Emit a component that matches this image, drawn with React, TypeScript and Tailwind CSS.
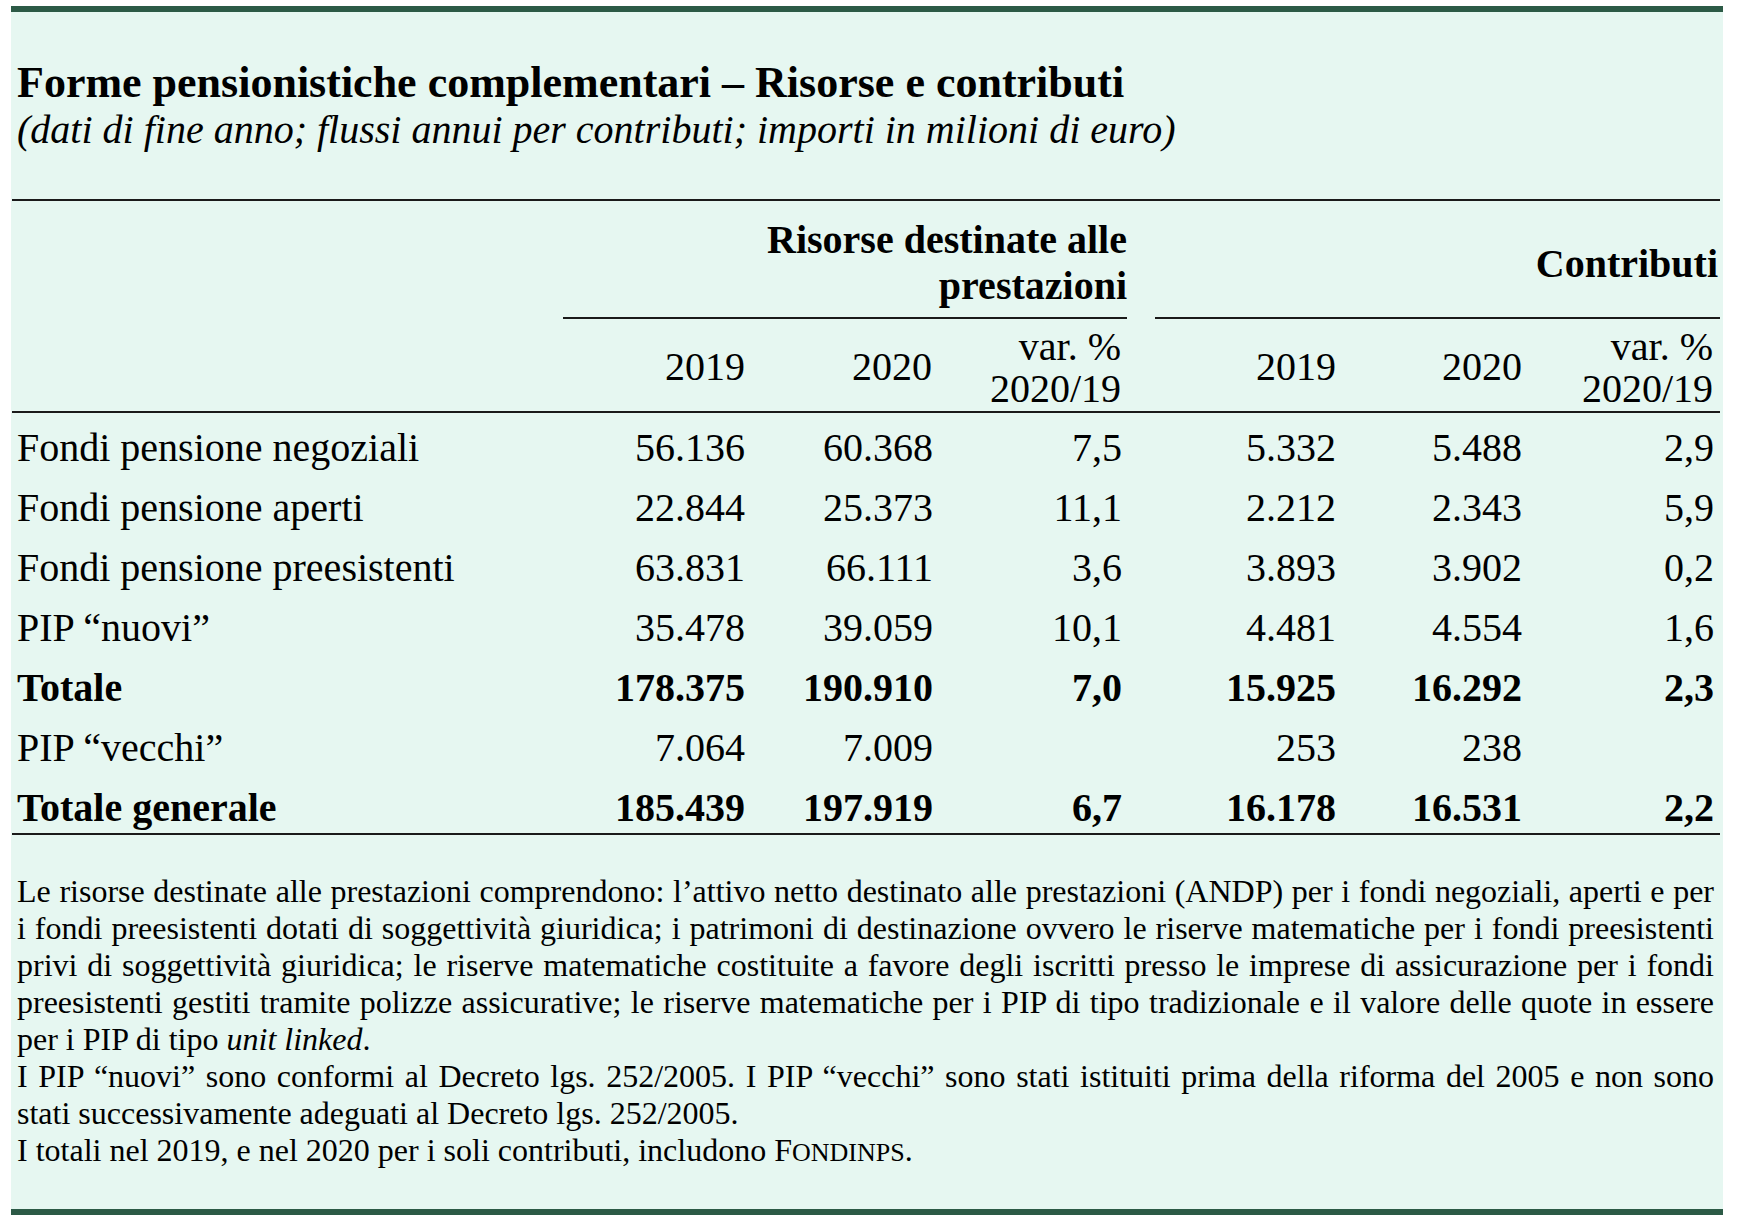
import React from "react";

type Row = { label: string; v: string[]; bold?: boolean };

const rows: Row[] = [
  { label: "Fondi pensione negoziali", v: ["56.136", "60.368", "7,5", "5.332", "5.488", "2,9"] },
  { label: "Fondi pensione aperti", v: ["22.844", "25.373", "11,1", "2.212", "2.343", "5,9"] },
  { label: "Fondi pensione preesistenti", v: ["63.831", "66.111", "3,6", "3.893", "3.902", "0,2"] },
  { label: "PIP “nuovi”", v: ["35.478", "39.059", "10,1", "4.481", "4.554", "1,6"] },
  { label: "Totale", v: ["178.375", "190.910", "7,0", "15.925", "16.292", "2,3"], bold: true },
  { label: "PIP “vecchi”", v: ["7.064", "7.009", "", "253", "238", ""] },
  { label: "Totale generale", v: ["185.439", "197.919", "6,7", "16.178", "16.531", "2,2"], bold: true },
];

const GRID = "grid grid-cols-[551px_190px_188px_186px_28px_188px_189px_188px]";

function BodyRow({ r }: { r: Row }) {
  const w = r.bold ? "font-bold" : "font-normal";
  return (
    <div className={`${GRID} h-[60px] pt-[11px] items-start text-[40px] leading-[48px] ${w}`}>
      <div className="pl-[5px] whitespace-nowrap">{r.label}</div>
      <div className="text-right pr-[8px]">{r.v[0]}</div>
      <div className="text-right pr-[8px]">{r.v[1]}</div>
      <div className="text-right pr-[5px]">{r.v[2]}</div>
      <div />
      <div className="text-right pr-[7px]">{r.v[3]}</div>
      <div className="text-right pr-[10px]">{r.v[4]}</div>
      <div className="text-right pr-[6px]">{r.v[5]}</div>
    </div>
  );
}

export default function App() {
  return (
    <div className="min-h-[1226px] bg-white pt-[6px] pl-[11px] font-['Liberation_Serif','Times_New_Roman',serif] text-black">
      <div className="w-[1712px] bg-[#e6f7f1] border-t-[6px] border-b-[6px] border-[#2c5a46]">
        {/* Title */}
        <div className="pt-[46px] pl-[6px]">
          <div className="text-[44px] leading-[50px] font-bold whitespace-nowrap">
            Forme pensionistiche complementari – Risorse e contributi
          </div>
          <div className="text-[40px] leading-[44px] italic whitespace-nowrap">
            (dati di fine anno; flussi annui per contributi; importi in milioni di euro)
          </div>
        </div>

        {/* Table */}
        <div className="mt-[47px] ml-[1px] w-[1708px] border-t-2 border-[#1a1a1a]">
          {/* header row 1 */}
          <div className={`${GRID} h-[118px] text-[40px] font-bold`}>
            <div />
            <div className="col-span-3 flex flex-col justify-start items-end pt-[16px] text-right leading-[46px] border-b-2 border-[#1a1a1a]">
              <span>Risorse destinate alle</span>
              <span>prestazioni</span>
            </div>
            <div />
            <div className="col-span-3 flex items-start justify-end pt-[40px] pr-[2px] leading-[46px] border-b-2 border-[#1a1a1a]">
              Contributi
            </div>
          </div>
          {/* header row 2 */}
          <div className={`${GRID} h-[94px] items-center text-[40px] border-b-2 border-[#1a1a1a]`}>
            <div />
            <div className="text-right pr-[8px] pt-[4px] leading-[44px]">2019</div>
            <div className="text-right pr-[9px] pt-[4px] leading-[44px]">2020</div>
            <div className="text-right pr-[6px] pt-[6px] leading-[42px]">
              <div>var. %</div>
              <div>2020/19</div>
            </div>
            <div />
            <div className="text-right pr-[7px] pt-[4px] leading-[44px]">2019</div>
            <div className="text-right pr-[10px] pt-[4px] leading-[44px]">2020</div>
            <div className="text-right pr-[7px] pt-[6px] leading-[42px]">
              <div>var. %</div>
              <div>2020/19</div>
            </div>
          </div>
          {/* body */}
          <div className="border-b-2 border-[#1a1a1a]">
            {rows.map((r) => (
              <BodyRow key={r.label} r={r} />
            ))}
          </div>
        </div>

        {/* Notes */}
        <div className="pt-[38px] pb-[38px] pl-[6px] pr-[9px] text-[32px] leading-[37px]">
          <div className="text-justify [text-align-last:justify]">
            Le risorse destinate alle prestazioni comprendono: l’attivo netto destinato alle prestazioni (ANDP) per i fondi negoziali, aperti e per
          </div>
          <div className="text-justify [text-align-last:justify]">
            i fondi preesistenti dotati di soggettività giuridica; i patrimoni di destinazione ovvero le riserve matematiche per i fondi preesistenti
          </div>
          <div className="text-justify [text-align-last:justify]">
            privi di soggettività giuridica; le riserve matematiche costituite a favore degli iscritti presso le imprese di assicurazione per i fondi
          </div>
          <div className="text-justify [text-align-last:justify]">
            preesistenti gestiti tramite polizze assicurative; le riserve matematiche per i PIP di tipo tradizionale e il valore delle quote in essere
          </div>
          <div>
            per i PIP di tipo <i>unit linked</i>.
          </div>
          <div className="text-justify [text-align-last:justify]">
            I PIP “nuovi” sono conformi al Decreto lgs. 252/2005. I PIP “vecchi” sono stati istituiti prima della riforma del 2005 e non sono
          </div>
          <div>stati successivamente adeguati al Decreto lgs. 252/2005.</div>
          <div>
            I totali nel 2019, e nel 2020 per i soli contributi, includono F<span className="text-[26px]">ONDINPS</span>.
          </div>
        </div>
      </div>
    </div>
  );
}
